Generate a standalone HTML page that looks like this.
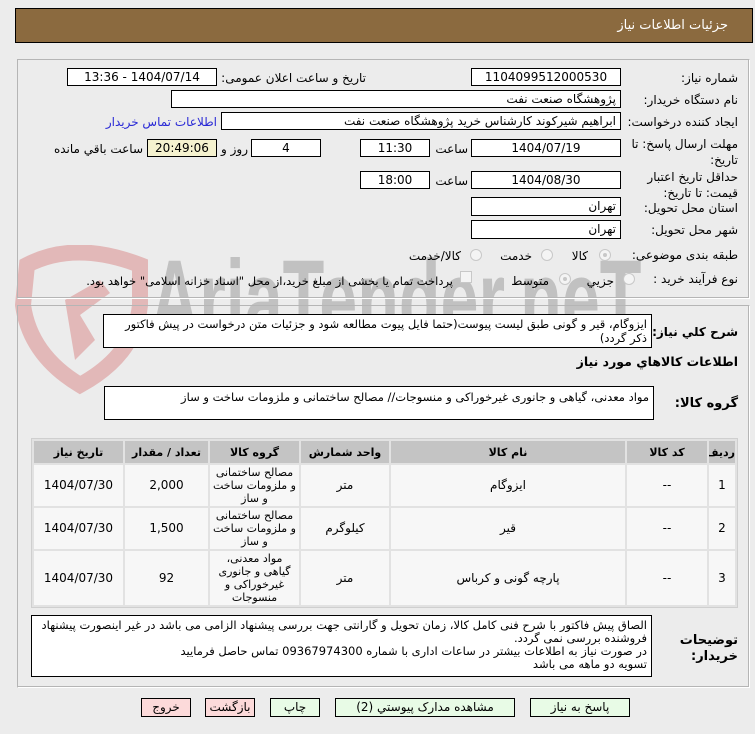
<!DOCTYPE html>
<html><head><meta charset="utf-8">
<style>
*{box-sizing:border-box;margin:0;padding:0}
body{width:755px;height:734px;background:#ececec;font-family:"DejaVu Sans","Liberation Sans",sans-serif;font-size:11px;color:#000;position:relative;overflow:hidden}
.a{position:absolute}
.box{position:absolute;background:#fff;border:1px solid #000;direction:rtl;padding:0 4px;line-height:16px;white-space:nowrap;overflow:hidden;font-size:12px}
.c{text-align:center}
.lbl{position:absolute;direction:rtl;text-align:right;white-space:nowrap;line-height:16px;font-size:12px}
.panel{position:absolute;border:1px solid #b5b5b5;border-right-color:#fff;border-bottom-color:#fff;box-shadow:inset -1px -1px 0 #b5b5b5}
.rad{position:absolute;width:12px;height:12px;border-radius:50%;border:1px solid #c8c8c8;background:#f4f4f4}
.rad.on::after{content:"";position:absolute;left:3px;top:3px;width:4px;height:4px;border-radius:50%;background:#c8c8c8}
table{position:absolute;border-collapse:separate;border-spacing:2px;background:#e2e2e2;direction:rtl;border:1px solid #cfcfcf;table-layout:fixed}
td,th{text-align:center;font-size:12px;line-height:19px;padding:0;overflow:hidden}
th{background:#c4c4c4;height:22px;font-weight:bold;font-size:11px}
td{background:#f7f7f7}
td .g3{font-size:11px;line-height:13px;overflow:hidden;display:flex;align-items:center;justify-content:center}
.btn{position:absolute;border:1px solid #000;height:19px;line-height:17px;text-align:center;direction:rtl;font-size:12px}
.g{background:#e8fbe6}.p{background:#fcdada}
</style></head><body>
<div class="a" style="left:15px;top:8px;width:738px;height:35px;background:#8b6a3f;border:1px solid #000"></div>
<div class="lbl" style="right:27px;top:18px;color:#fff;font-size:13px">جزئیات اطلاعات نیاز</div>

<svg class="a" style="left:15px;top:245px" width="135" height="150" viewBox="0 0 135 150">
<path d="M12 20 Q60 -5 125 20 L125 60 Q120 110 65 140 Q15 110 8 60Z" fill="none" stroke="#e2b8b8" stroke-width="16"/>
<path d="M50 55 L85 35 L95 48 L65 70 L80 95 L60 115 Z" fill="#e2b8b8"/>
</svg>
<div class="a" style="left:150px;top:240px;font-family:'Liberation Sans',sans-serif;font-weight:bold;font-size:110px;color:rgba(150,150,150,0.5);transform:scaleX(0.62);transform-origin:left top;line-height:120px;white-space:nowrap">AriaTender.neT</div>

<div class="panel" style="left:17px;top:59px;width:733px;height:240px"></div>
<div class="panel" style="left:17px;top:305px;width:733px;height:383px"></div>

<div class="lbl" style="right:17px;top:70px">شماره نیاز:</div>
<div class="box c" style="left:471px;top:68px;width:150px;height:18px">1104099512000530</div>
<div class="lbl" style="right:389px;top:70px">تاریخ و ساعت اعلان عمومی:</div>
<div class="box c" style="left:67px;top:68px;width:150px;height:18px">1404/07/14 - 13:36</div>

<div class="lbl" style="right:17px;top:92px">نام دستگاه خریدار:</div>
<div class="box" style="left:171px;top:90px;width:450px;height:18px">پژوهشگاه صنعت نفت</div>

<div class="lbl" style="right:17px;top:114px">ایجاد کننده درخواست:</div>
<div class="box" style="left:221px;top:112px;width:400px;height:18px">ابراهیم شیرکوند کارشناس خرید پژوهشگاه صنعت نفت</div>
<div class="lbl" style="right:538px;top:114px;color:#2929d6">اطلاعات تماس خریدار</div>

<div class="lbl" style="right:17px;top:136px;line-height:16px">مهلت ارسال پاسخ: تا<br>تاریخ:</div>
<div class="box c" style="left:471px;top:139px;width:150px;height:18px">1404/07/19</div>
<div class="lbl" style="right:287px;top:141px">ساعت</div>
<div class="box c" style="left:360px;top:139px;width:70px;height:18px">11:30</div>
<div class="box c" style="left:251px;top:139px;width:70px;height:18px">4</div>
<div class="lbl" style="right:507px;top:141px">روز و</div>
<div class="box c" style="left:147px;top:139px;width:70px;height:18px;background:#f5f2cf">20:49:06</div>
<div class="lbl" style="right:612px;top:141px">ساعت باقي مانده</div>

<div class="lbl" style="right:17px;top:169px">حداقل تاریخ اعتبار<br>قیمت: تا تاریخ:</div>
<div class="box c" style="left:471px;top:171px;width:150px;height:18px">1404/08/30</div>
<div class="lbl" style="right:287px;top:173px">ساعت</div>
<div class="box c" style="left:360px;top:171px;width:70px;height:18px">18:00</div>

<div class="lbl" style="right:17px;top:200px">استان محل تحویل:</div>
<div class="box" style="left:471px;top:197px;width:150px;height:19px">تهران</div>
<div class="lbl" style="right:17px;top:222px">شهر محل تحویل:</div>
<div class="box" style="left:471px;top:220px;width:150px;height:19px">تهران</div>

<div class="lbl" style="right:17px;top:247px">طبقه بندی موضوعی:</div>
<div class="rad on" style="left:599px;top:249px"></div><div class="lbl" style="right:167px;top:248px">کالا</div>
<div class="rad" style="left:541px;top:249px"></div><div class="lbl" style="right:223px;top:248px">خدمت</div>
<div class="rad" style="left:470px;top:249px"></div><div class="lbl" style="right:294px;top:248px">کالا/خدمت</div>

<div class="lbl" style="right:17px;top:271px">نوع فرآیند خرید :</div>
<div class="rad" style="left:623px;top:273px"></div><div class="lbl" style="right:141px;top:273px">جزیي</div>
<div class="rad on" style="left:559px;top:273px"></div><div class="lbl" style="right:206px;top:273px">متوسط</div>
<div class="a" style="left:460px;top:271px;width:12px;height:12px;border:1px solid #c8c8c8;background:#f4f4f4"></div>
<div class="lbl" style="right:302px;top:273px;font-size:11.5px">پرداخت تمام یا بخشی از مبلغ خرید،از محل "اسناد خزانه اسلامی" خواهد بود.</div>

<div class="lbl" style="right:17px;top:324px;font-weight:bold;font-size:12px">شرح کلي نیاز:</div>
<div class="box" style="left:103px;top:314px;width:549px;height:34px;white-space:normal;line-height:14px;padding-top:2px;font-size:11.5px">ایزوگام، قیر و گونی طبق لیست پیوست(حتما فایل پیوت مطالعه شود و  جزئیات متن درخواست در پیش فاکتور ذکر گردد)</div>
<div class="lbl" style="right:17px;top:354px;font-weight:bold;font-size:12.5px">اطلاعات کالاهاي مورد نیاز</div>
<div class="lbl" style="right:17px;top:396px;font-weight:bold;font-size:13px">گروه کالا:</div>
<div class="box" style="left:104px;top:386px;width:550px;height:34px;padding-top:2px;font-size:11.5px">مواد معدنی، گیاهی و جانوری غیرخوراکی و منسوجات// مصالح ساختمانی و ملزومات ساخت و ساز</div>

<table style="left:31px;top:438px;width:707px">
<colgroup><col style="width:26px"><col style="width:80px"><col><col style="width:88px"><col style="width:89px"><col style="width:83px"><col style="width:89px"></colgroup>
<tr><th>ردیف</th><th>کد کالا</th><th>نام کالا</th><th>واحد شمارش</th><th>گروه کالا</th><th>تعداد / مقدار</th><th>تاریخ نیاز</th></tr>
<tr><td>1</td><td>--</td><td>ایزوگام</td><td>متر</td><td><div class="g3" style="height:41px">مصالح ساختمانی<br>و ملزومات ساخت<br>و ساز</div></td><td>2,000</td><td>1404/07/30</td></tr>
<tr><td>2</td><td>--</td><td>قیر</td><td>کیلوگرم</td><td><div class="g3" style="height:41px">مصالح ساختمانی<br>و ملزومات ساخت<br>و ساز</div></td><td>1,500</td><td>1404/07/30</td></tr>
<tr><td>3</td><td>--</td><td>پارچه گونی و کرباس</td><td>متر</td><td><div class="g3" style="height:54px">مواد معدنی،<br>گیاهی و جانوری<br>غیرخوراکی و<br>منسوجات</div></td><td>92</td><td>1404/07/30</td></tr>
</table>

<div class="lbl" style="right:17px;top:633px;font-weight:bold;font-size:13px">توضیحات<br>خریدار:</div>
<div class="box" style="left:31px;top:615px;width:621px;height:62px;white-space:normal;line-height:13px;padding-top:3px;font-size:11.5px">الصاق پیش فاکتور با شرح فنی کامل کالا، زمان تحویل و گارانتی جهت بررسی پیشنهاد الزامی می باشد در غیر اینصورت پیشنهاد فروشنده بررسی نمی گردد.<br>در صورت نیاز به اطلاعات بیشتر در ساعات اداری با شماره 09367974300 تماس حاصل فرمایید<br>تسویه دو ماهه می باشد</div>

<div class="btn p" style="left:141px;top:698px;width:50px">خروج</div>
<div class="btn p" style="left:205px;top:698px;width:50px">بازگشت</div>
<div class="btn g" style="left:270px;top:698px;width:50px">چاپ</div>
<div class="btn g" style="left:335px;top:698px;width:180px">مشاهده مدارک پیوستي (2)</div>
<div class="btn g" style="left:530px;top:698px;width:100px">پاسخ به نیاز</div>
</body></html>
